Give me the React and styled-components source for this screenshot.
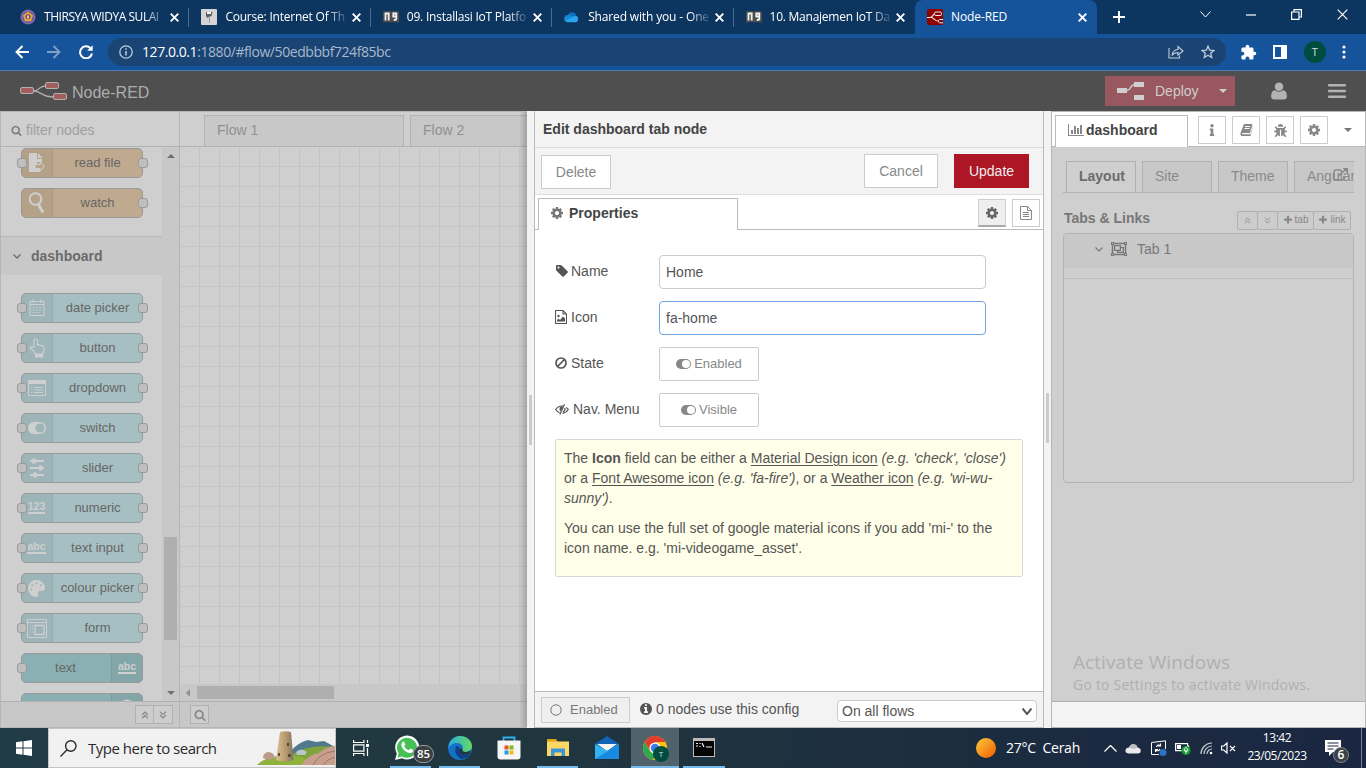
import React from "react";
import styled, { createGlobalStyle, css } from "styled-components";
import { FaBug, FaInfo, FaPalette, FaRegObjectGroup } from "react-icons/fa";
import { MdExtension } from "react-icons/md";

const Global = createGlobalStyle`
  * { box-sizing: border-box; }
  body { margin: 0; overflow: hidden; }
`;
const ui = `"Open Sans", "Noto Sans", sans-serif`;

const Screen = styled.div`
  width: 1366px; height: 768px; display: flex; flex-direction: column; overflow: hidden;
  font-family: "Liberation Sans", Arial, sans-serif; font-size: 14px; line-height: 20px; color: #555;
  svg { display: block; flex: none; }
`;

/* ---------- icons ---------- */
const P = {
  search: "M1216 832q0-185-131.5-316.5t-316.5-131.5-316.5 131.5-131.5 316.5 131.5 316.5 316.5 131.5 316.5-131.5 131.5-316.5zm512 832q0 52-38 90t-90 38q-54 0-90-38l-343-342q-179 124-399 124-143 0-273.5-55.5t-225-150-150-225-55.5-273.5 55.5-273.5 150-225 225-150 273.5-55.5 273.5 55.5 225 150 150 225 55.5 273.5q0 220-124 399l343 343q37 37 37 90z",
  cog: "M1152 896q0-106-75-181t-181-75-181 75-75 181 75 181 181 75 181-75 75-181zm512-109v222q0 12-8 23t-20 13l-185 28q-19 54-39 91 35 50 107 138 10 12 10 25t-9 23q-27 37-99 108t-94 71q-12 0-26-9l-138-108q-44 23-91 38-16 136-29 186-7 28-36 28h-222q-14 0-24.5-8.5t-11.5-21.5l-28-184q-49-16-90-37l-141 107q-10 9-25 9-14 0-25-11-126-114-165-168-7-10-7-23 0-12 8-23 15-21 51-66.5t54-70.5q-27-50-41-99l-183-27q-13-2-21-12.5t-8-23.5v-222q0-12 8-23t19-13l186-28q14-46 39-92-40-57-107-138-10-12-10-24 0-10 9-23 26-36 98.5-107.5t94.5-71.5q13 0 26 10l138 107q44-23 91-38 16-136 29-186 7-28 36-28h222q14 0 24.5 8.5t11.5 21.5l28 184q49 16 90 37l142-107q9-9 24-9 13 0 25 10 129 119 165 170 7 8 7 22 0 12-8 23-15 21-51 66.5t-54 70.5q26 50 41 98l183 28q13 2 21 12.5t8 23.5z",
  user: "M1600 1405q0 120-73 189.5t-194 69.5h-874q-121 0-194-69.5t-73-189.5q0-53 3.5-103.5t14-109 26.5-108.5 43-97.5 62-81 85.5-53.5 111.5-20q9 0 42 21.5t74.5 48 108 48 133.5 21.5 133.5-21.5 108-48 74.5-48 42-21.5q61 0 111.5 20t85.5 53.5 62 81 43 97.5 26.5 108.5 14 109 3.5 103.5zm-320-893q0 159-112.5 271.5t-271.5 112.5-271.5-112.5-112.5-271.5 112.5-271.5 271.5-112.5 271.5 112.5 112.5 271.5z",
  tag: "M576 448q0-53-37.5-90.5t-90.5-37.5-90.5 37.5-37.5 90.5 37.5 90.5 90.5 37.5 90.5-37.5 37.5-90.5zm1067 576q0 53-37 90l-491 492q-39 37-91 37-53 0-90-37l-715-716q-38-37-64.5-101t-26.5-117v-416q0-52 38-90t90-38h416q53 0 117 26.5t102 64.5l715 714q37 39 37 91z",
  plus: "M1600 736v192q0 40-28 68t-68 28h-416v416q0 40-28 68t-68 28h-192q-40 0-68-28t-28-68v-416h-416q-40 0-68-28t-28-68v-192q0-40 28-68t68-28h416v-416q0-40 28-68t68-28h192q40 0 68 28t28 68v416h416q40 0 68 28t28 68z",
  info: "M1152 1376v-160q0-14-9-23t-23-9h-96v-512q0-14-9-23t-23-9h-320q-14 0-23 9t-9 23v160q0 14 9 23t23 9h96v320h-96q-14 0-23 9t-9 23v160q0 14 9 23t23 9h448q14 0 23-9t9-23zm-128-896v-160q0-14-9-23t-23-9h-192q-14 0-23 9t-9 23v160q0 14 9 23t23 9h192q14 0 23-9t9-23zm640 416q0 209-103 385.5t-279.5 279.5-385.5 103-385.5-103-279.5-279.5-103-385.5 103-385.5 279.5-279.5 385.5-103 385.5 103 279.5 279.5 103 385.5z",
};
const Glyph = ({ name, size = 14 }) => (
  <svg width={size} height={size} viewBox="0 0 1792 1792" fill="currentColor"><path d={P[name]} /></svg>
);
const Line = ({ w = 12, h = w, box = `0 0 ${w} ${h}`, sw = 1.2, children }) => (
  <svg width={w} height={h} viewBox={box} fill="none" stroke="currentColor" strokeWidth={sw}>{children}</svg>
);
const CloseX = ({ s = 9, sw = 1.9 }) => <Line w={s} sw={sw}><path d={`M.7.7 ${s - 0.7} ${s - 0.7}M${s - 0.7}.7.7 ${s - 0.7}`} /></Line>;
const BarChart = () => (
  <svg width="16" height="14" viewBox="0 0 2048 1792" fill="currentColor"><path d="M640 896v512h-256v-512h256zm384-512v1024h-256v-1024h256zm1024 1152v128h-2048v-1536h128v1408h1920zm-640-896v768h-256v-768h256zm384-384v1152h-256v-1152h256z" /></svg>
);
const Toggle = () => (
  <svg width="15" height="10" viewBox="0 0 15 10"><rect width="15" height="10" rx="5" fill="#888" /><circle cx="10" cy="5" r="4" fill="#fff" /></svg>
);
const Chevron = ({ w = 8, h = 5, sw = 1.3 }) => <Line w={w} h={h} sw={sw}><path d={`M.5.5 ${w / 2} ${h - 1} ${w - 0.5}.5`} /></Line>;
const Double = ({ up, s = 8, sw = 1.2 }) => (
  <Line w={s} h={s} box="0 0 8 8" sw={sw}><path d={up ? "M1 4 4 1 7 4M1 7.4 4 4.4 7 7.4" : "M1 .6 4 3.6 7 .6M1 4 4 7 7 4"} /></Line>
);
const Caret = styled.i`
  width: 0; height: 0; border: ${p => p.$s || 4}px solid transparent; border-bottom-width: 0;
  border-top-color: ${p => p.$c}; ${p => p.$up && css`transform: rotate(180deg);`} ${p => p.$left && css`transform: rotate(90deg);`}
`;

/* ---------- browser ---------- */
const TabStrip = styled.div`height: 34px; display: flex; background: #0c3560; color: #fff; padding-left: 8px;`;
const BTab = styled.div`
  width: ${p => p.$w || 181.4}px; display: flex; align-items: center; padding: 0 10px 0 12px; position: relative;
  ${p => p.$active && css`background: #15549b; border-radius: 8px 8px 0 0;`}
  &::after { content: ""; position: absolute; right: 0; top: 8px; height: 19px; width: 1px; background: ${p => p.$active || p.$last ? "transparent" : "#4c6c8e"}; }
`;
const BTitle = styled.span`
  flex: 1; font: 12px/18px ${ui}; letter-spacing: ${p => p.$ls || -0.15}px; margin: 0 6px 0 8px; white-space: nowrap; overflow: hidden;
  ${p => !p.$full && css`mask-image: linear-gradient(90deg, #000 84%, rgba(0,0,0,.15));`}
`;
const WinControls = styled.div`margin-left: auto; display: flex; align-items: center; padding: 0 18px 5px 0; gap: 35px;`;
const NewTab = styled.div`padding: 11px 0 0 16px;`;
const Toolbar = styled.div`
  height: 37px; display: flex; align-items: center; background: #15549b; border-bottom: 1px solid #4a7db5; color: #fff; padding: 0 20px 0 15px;
`;
const NavIcons = styled.div`display: flex; gap: 18px; width: 93px; align-items: center;`;
const Omni = styled.div`
  width: 1118px; height: 28px; border-radius: 14px; background: #1a4474; display: flex; align-items: center; padding: 0 11px; color: #c3cddb;
`;
const Url = styled.span`font: 14px/20px ${ui}; letter-spacing: -.43px; margin-left: 9px; flex: 1; white-space: nowrap; color: #a9b9cc; b { font-weight: 400; color: #fff; }`;
const Star = styled.span`margin-left: 17px;`;
const Ext = styled.div`flex: 1; display: flex; align-items: center; justify-content: space-between; padding-left: 14px;`;
const Avatar = styled.span`
  width: ${p => p.$s}px; height: ${p => p.$s}px; border-radius: 50%; background: #004d40; color: #cfe0dc;
  font: ${p => p.$s * 0.5}px/${p => p.$s}px ${ui}; text-align: center;
`;

/* ---------- Node-RED shell ---------- */
const Header = styled.div`height: 40px; background: #4f4f4f; display: flex; align-items: center; color: #b3b3b3; padding: 0 20px;`;
const Brand = styled.span`font-size: 16px; margin: 3px 0 0 5px; flex: 1; color: #adadad;`;
const Deploy = styled.div`
  width: 130px; height: 30px; background: #99575f; color: #cfcfcf; display: flex; align-items: center; padding: 0 8px 0 12px; font-size: 14px; margin-right: 34px;
  span { margin-left: 10px; flex: 1; }
`;
const UserSlot = styled.div`margin-right: 39px;`;
const Body = styled.div`height: 617px; display: flex; background: #f3f3f3;`;
const Palette = styled.div`
  width: 180px; background: #cfcfcf; border: solid #b6b6b6; border-width: 1px; display: flex; flex-direction: column;
`;
const Filter = styled.div`
  height: 35px; display: flex; align-items: center; gap: 4px; padding: 2px 0 0 10px; border-bottom: 1px solid #b3b3b3; color: #7c7c7c;
  span { color: #9f9f9f; }
`;
const PaletteMid = styled.div`height: 554px; display: flex; overflow: hidden;`;
const PaletteList = styled.div`width: 161px; padding-top: 1px; overflow: hidden;`;
const VScroll = styled.div`
  flex: 1; background: #c8c8c8; display: flex; flex-direction: column; align-items: center; padding: 7px 0 6px;
`;
const VThumb = styled.div`width: 13px; height: 103px; background: #afafaf; margin: 379px 0 auto;`;
const Nodes = styled.div`display: flex; flex-direction: column; gap: 10px; padding: ${p => p.$top || 0}px 0 0 20px;`;
const NodeBox = styled.div`
  width: 122px; height: 30px; border: 1px solid #999; border-radius: 5px; display: flex; position: relative; font-size: 13px; color: #666;
  background: ${p => p.$bg}; flex-direction: ${p => (p.$rev ? "row-reverse" : "row")};
`;
const NodeIcon = styled.div`
  width: 31px; display: flex; align-items: center; justify-content: center; background: rgba(0,0,0,.05); color: #cfcfcf;
  padding-right: ${p => (p.$rev ? 0 : 1)}px;
  border-radius: ${p => (p.$rev ? "0 4px 4px 0" : "4px 0 0 4px")};
  ${p => (p.$rev ? "border-left" : "border-right")}: 1px solid rgba(0,0,0,.06);
`;
const NodeLabel = styled.span`flex: 1; text-align: center; line-height: 28px; white-space: nowrap; margin-right: ${p => (p.$rev ? 2 : 0)}px;`;
const Port = styled.i`
  position: absolute; top: 9px; ${p => (p.$side === "left" ? "left: -5px" : "right: -6px")}; width: 10px; height: 10px; border: 1px solid #999; border-radius: 3px; background: #bfbfbf;
`;
const Category = styled.div`
  height: 39px; margin: 18px 0 0; border-top: 1px solid #b9b9b9; background: #c8c8c8; display: flex; align-items: center; gap: 10px; padding-left: 12px; color: #6b6b6b; font-weight: bold;
`;
const Underlined = styled.span`font: bold 10.5px/9px "Liberation Sans", sans-serif; border-bottom: 2px solid currentColor; padding-bottom: 1px;`;
const Foot = styled.div`
  flex: 1; background: #c8c8c8; border-top: 1px solid #b0b0b0; display: flex; align-items: center; padding: ${p => p.$pad};
`;
const MiniBtn = styled.div`
  width: ${p => p.$w || 19}px; height: 19px; border: 1px solid #b0b0b0; margin-right: -1px; display: flex; align-items: center; justify-content: center; gap: 2px;
  color: #888; background: #cdcdcd; font-size: 10px; border-radius: ${p => p.$r || 0}px;
`;

const Workspace = styled.div`
  width: 347px; display: flex; flex-direction: column; background: #cfcfcf; border: solid #b6b6b6; border-width: 1px 0; position: relative; overflow: hidden;
  &::after { content: ""; position: absolute; right: 0; top: 0; bottom: 0; width: 8px; background: linear-gradient(90deg, transparent, rgba(0,0,0,.2)); }
`;
const FlowTabs = styled.div`height: 35px; display: flex; gap: 6px; padding: 3px 0 0 24px; border-bottom: 1px solid #b3b3b3;`;
const FlowTab = styled.div`
  width: 200px; flex: none; border: 1px solid #b3b3b3; border-bottom: 0; background: #c8c8c8; color: #909090; padding: 4px 12px;
`;
const Grid = styled.div`
  height: 537px; background-image: linear-gradient(#c4c4c4 1px, transparent 1px), linear-gradient(90deg, #c4c4c4 1px, transparent 1px);
  background-size: 20px 20px; background-position: 19px 19px;
`;
const HScroll = styled.div`height: 17px; background: #c8c8c8; display: flex; align-items: center; padding-left: 4px; gap: 5px;`;
const HThumb = styled.div`width: 137px; height: 13px; background: #afafaf;`;

const Separator = styled.div`
  width: ${p => p.$w}px; background: #f3f3f3; display: flex; align-items: center; justify-content: center; padding-bottom: ${p => p.$pb || 0}px;
  i { width: 3px; height: 50px; background: #ccc; }
`;

/* ---------- edit tray ---------- */
const Tray = styled.div`width: 510px; background: #fff; border: solid #bbb; border-width: 0 1px 1px; display: flex; flex-direction: column;`;
const TrayTitle = styled.div`height: 37px; background: #f3f3f3; border-bottom: 1px solid #ddd; font-weight: bold; color: #444; line-height: 36px; padding-left: 8px;`;
const TrayBar = styled.div`height: 47px; background: #f3f3f3; border-bottom: 1px solid #ddd; display: flex; padding: 6px 14px 0 6px;`;
const Btn = styled.div`
  width: ${p => p.$w}px; height: 34px; border: 1px solid ${p => (p.$primary ? "#ad1625" : "#ccc")}; background: ${p => (p.$primary ? "#ad1625" : "#fff")};
  color: ${p => (p.$primary ? "#eee" : "#888")}; display: flex; align-items: center; justify-content: center;
  margin-top: ${p => p.$mt || 0}px; margin-left: ${p => p.$ml || 0}px;
`;
const ToggleBtn = styled(Btn)`font-size: 13px; gap: 3px; border-radius: 2px; padding-bottom: 1px;`;
const TrayTabs = styled.div`height: 35px; display: flex; gap: 6px; padding: 3px 3px 0; border-bottom: 1px solid #bbb; position: relative;`;
const TrayTab = styled.div`
  width: 200px; height: 32px; border: 1px solid #bbb; border-bottom: 0; background: #fff; display: flex; align-items: center; gap: 5px; padding: 0 0 3px 11px;
  font-weight: bold; color: #444; margin-right: auto; svg { color: #777; }
`;
const IconBtn = styled.div`
  width: 28px; height: 28px; margin-top: 1px; border: 1px solid #ccc; display: flex; align-items: center; justify-content: center; color: #888;
  ${p => p.$on && css`background: #efefef; border-bottom: 2px solid #aaa; color: #666;`}
`;
const Form = styled.div`flex: 1; padding: 25px 20px 0; color: #555;`;
const Row = styled.div`height: 34px; margin-bottom: 12px; display: flex;`;
const Label = styled.div`width: 104px; height: 32px; display: flex; align-items: center; gap: ${p => p.$gap || 4}px;`;
const Input = styled.div`
  width: 327px; height: 34px; border: 1px solid ${p => (p.$focus ? "#72a5e4" : "#ccc")}; border-radius: 4px; padding: 6px; line-height: 20px;
`;
const Tip = styled.div`
  background: #ffffe9; border: 1px solid #d9dbd3; border-radius: 2px; height: 138px; padding: 8px; white-space: nowrap;
  p { margin: 0 0 10px; } u { text-underline-offset: 2px; }
`;
const TrayFoot = styled.div`height: 36px; background: #f3f3f3; border-top: 1px solid #bbb; display: flex; padding: 5px 6px 0;`;
const Status = styled.div`
  width: 89px; height: 26px; border: 1px solid #ccc; background: #efefef; display: flex; align-items: center; gap: 8px; padding-left: 8px; color: #777; font-size: 13px;
`;
const Usage = styled.div`display: flex; gap: 3px; align-items: center; height: 24px; margin-left: 9px; flex: 1;`;
const Select = styled.div`
  width: 200px; height: 22px; margin-top: 3px; border: 1px solid #ccc; border-radius: 4px; background: #fff; display: flex; align-items: center; justify-content: space-between; padding: 0 4px;
`;

/* ---------- sidebar ---------- */
const Sidebar = styled.div`width: 315px; border: 1px solid #b6b6b6; display: flex; flex-direction: column; background: #fff;`;
const SideTabs = styled.div`height: 35px; display: flex; gap: 6px; padding: 3px 13px 0 3px; border-bottom: 1px solid #bbb; position: relative;`;
const SideTab = styled.div`
  width: 133px; height: 32px; flex: none; border: 1px solid #bbb; border-bottom: 0; background: #fff; display: flex; align-items: center; gap: 2px; padding: 0 0 4px 12px;
  font-weight: bold; color: #444; margin-right: 4px; svg { color: #888; }
`;
const SideIcon = styled(IconBtn)`margin-top: 0;`;
const More = styled.div`margin-left: auto; padding-top: 13px;`;
const SideBody = styled.div`height: 554px; background: #cfcfcf; display: flex; flex-direction: column; padding: 14px 11px 0; color: #777; position: relative;`;
const SubTabs = styled.div`width: 291px; height: 32px; display: flex; gap: 6px; padding-left: 3px; border-bottom: 1px solid #b3b3b3; overflow: hidden; position: relative;`;
const SubTab = styled.div`
  width: 70px; height: 32px; flex: none; border: 1px solid #b0b0b0; border-bottom-color: ${p => (p.$on ? "#cfcfcf" : "#b3b3b3")};
  background: ${p => (p.$on ? "#cfcfcf" : "#c8c8c8")}; font-weight: ${p => (p.$on ? "bold" : "normal")}; color: ${p => (p.$on ? "#6b6b6b" : "#8a8a8a")}; padding: 4px 0 0 12px;
`;
const Popout = styled.div`position: absolute; right: 17px; top: 21px; color: #888;`;
const LinksHead = styled.div`display: flex; align-items: center; height: 20px; margin: 17px 4px 3px 1px; b { flex: 1; color: #777; margin-top: -4px; }`;
const Tree = styled.div`width: 291px; height: 250px; border: 1px solid #b3b3b3; border-radius: 4px; overflow: hidden;`;
const TreeRow = styled.div`height: 34px; background: #c8c8c8; display: flex; align-items: center; padding: 0 0 4px 31px; color: #777; span { margin-left: 10px; } svg + svg { margin-left: 8px; }`;
const TreeGap = styled.div`height: 11px; border-bottom: 1px solid #bdbdbd;`;
const Watermark = styled.div`
  margin: auto 0 6px 10px; font: 14px/20px ${ui}; letter-spacing: .22px; color: #b0b0b0; white-space: nowrap;
  div { font-size: 19px; line-height: 26px; letter-spacing: .07px; }
`;
const SideFoot = styled.div`flex: 1; border-top: 1px solid #b0b0b0; background: #f3f3f3;`;

/* ---------- taskbar ---------- */
const Taskbar = styled.div`height: 40px; display: flex; background: linear-gradient(90deg, #223c45, #20363f 40%, #1b2a40 80%, #1b2742); color: #fff;`;
const Start = styled.div`width: 48px; display: flex; align-items: center; justify-content: center;`;
const SearchBox = styled.div`
  width: 288px; background: #f1f1f1; border: 1px solid #c4c4c4; color: #2b2b2b; display: flex; align-items: center; padding-left: 11px;
  span { font: 15px/20px ${ui}; letter-spacing: -.5px; margin-left: 11px; flex: 1; white-space: nowrap; }
`;
const TaskApp = styled.div`
  width: ${p => p.$w || 49}px; display: flex; align-items: center; justify-content: center; position: relative; padding-bottom: 1px;
  background: ${p => (p.$active ? "#50626b" : "transparent")};
  &::after { content: ""; position: absolute; bottom: 0; height: 2px; left: ${p => (p.$active ? 0 : 4)}px; right: ${p => (p.$active ? 0 : 4)}px; background: ${p => (p.$run ? "#76b9ed" : "transparent")}; }
`;
const WaIcon = styled.span`margin-left: 2px;`;
const Count = styled.span`
  position: absolute; left: 27px; top: 17px; width: 21px; height: 18px; border-radius: 9px; background: #3a3f42; border: 1px solid #999; font: 600 11.5px/16px ${ui}; text-align: center;
`;
const OnIcon = styled.div`position: absolute; left: 22px; top: 18px; display: flex;`;
const SysTray = styled.div`margin-left: auto; display: flex; align-items: center; font: 14px/20px ${ui}; padding-right: 4px;`;
const Weather = styled.span`margin: 0 24px 0 10px; white-space: pre; letter-spacing: -.25px;`;
const TrayIcons = styled.div`display: flex; align-items: center; gap: 8.4px; width: 132px;`;
const Clock = styled.div`font: 12px/18px ${ui}; text-align: center; letter-spacing: -.45px; width: 60px; margin: 0 18px 2px 11px; white-space: nowrap;`;
const Notice = styled.div`position: relative; width: 37px; height: 40px; padding: 12px 0 0 0; border-right: 1px solid #76808e;`;
const NoticeCount = styled.span`
  position: absolute; left: 8px; top: 19px; width: 16px; height: 16px; border-radius: 50%; background: #3b4148; border: 1px solid #888; font: 600 12px/14px ${ui}; text-align: center;
`;

const Favicons = {
  crest: <svg width="16" height="16" viewBox="0 0 16 16"><circle cx="8" cy="8" r="7.6" fill="#6d5aa0" /><circle cx="8" cy="8" r="6.4" fill="none" stroke="#a99ac0" strokeWidth=".8" strokeDasharray="1 1" /><path d="m8 2.500 5 3.700-1.800 6H4.800L3 6.200z" fill="#e6a13a" /><circle cx="8" cy="7.800" r="2.500" fill="#5a4a9c" /><path d="M7 6.500h2v3H7z" fill="#f3cf61" /></svg>,
  lamp: <svg width="16" height="16" viewBox="0 0 16 16"><rect width="16" height="16" rx="1" fill="#d4d4d4" /><path d="M5 3h6.500l-1 4-3 1L6.500 9 5 7z" fill="#5e5e5e" /><path d="M6 3h4v2H6z" fill="#f7f7f7" /><path d="M8.500 8v5.500" stroke="#999" /></svg>,
  book: <svg width="16" height="16" viewBox="0 0 16 16"><path d="M0 2.500 7 2l1 1 1-1 7 .5v11L9 13l-1 1-1-1-7 .5z" fill="#4d4d4d" /><path d="M2.500 11.500v-7h3.200v7M13.300 7.500h-3v-3h3v5.500q0 1-2.500 1" fill="none" stroke="#f2f2f2" strokeWidth="1.800" /></svg>,
  cloud: <svg width="16" height="12" viewBox="0 0 17 12"><path d="M4 4a5 5 0 0 1 9-.5L8 8z" fill="#0f6cbd" /><path d="M4 3.800A4 4 0 0 0 .7 10L11 6 6.500 3.800z" fill="#1488d8" /><path d="M12.500 4.500a3.800 3.800 0 0 1 .5 7H3.500A3.600 3.600 0 0 1 .8 9.800L9 6z" fill="#2ba4ee" /></svg>,
  red: <svg width="16" height="16" viewBox="0 0 16 16"><rect width="16" height="16" rx="1.500" fill="#8f0000" /><path d="M0 8.500h3c3 0 2.500-4 6-4M4 8.300c3 .3 3 4 8 4h4" fill="none" stroke="#eee" strokeWidth="1.100" /><rect x="7.500" y="3" width="7" height="3.500" rx="1.300" fill="#8f0000" stroke="#eee" /><path d="M16 10.500h-3.500l-1 1v1.500l1 .8H16" fill="#8f0000" stroke="#eee" /></svg>,
};
const browserTabs = [
  ["crest", "THIRSYA WIDYA SULAI", -0.45], ["lamp", "Course: Internet Of Thi", -0.22], ["book", "09. Installasi IoT Platfo", -0.22],
  ["cloud", "Shared with you - One", -0.15], ["book", "10. Manajemen IoT Da", -0.25],
];

const nodeIcons = {
  file: <svg width="18" height="20" viewBox="0 0 18 20" fill="currentColor"><path d="M1 0h8v6h5v3H9v6h3v4H1z" /><path d="M10 0l4.500 5H10z" /><path d="M7 11.500h5V9l4.500 4.500L12 18v-2.500H7z" fill="#b8a58c" stroke="currentColor" /></svg>,
  watch: <svg width="18" height="22" viewBox="0 0 18 22" fill="none" stroke="currentColor"><circle cx="7.500" cy="7" r="5.800" strokeWidth="2" /><path d="m10.500 12.500 4.500 8" strokeWidth="3" /></svg>,
  date: <svg width="16" height="18" viewBox="0 0 16 18" fill="none" stroke="currentColor"><path d="M1 2.500h14v14H1zM1 5.500h14M4 0v4M12 0v4" /><path d="M4 8.500h9M4 11h9M4 13.500h7" strokeWidth=".8" strokeDasharray="2 1" /></svg>,
  button: <svg width="18" height="20" viewBox="0 0 18 20" fill="none" stroke="currentColor" strokeWidth="1.200"><path d="M6 9V2q2-2 3.500 0v5q2-1 3 .5 2-.5 2.500 1 1 0 1 1.500v3l-1.500 3H7.500Q6 12.500 2 10q0-2 4-.5zM7.500 16v3h7v-3" /><path d="M8 16.500h6v2H8z" fill="currentColor" /></svg>,
  dropdown: <svg width="18" height="16" viewBox="0 0 18 16"><path d="M.5.5h17v15H.5z" fill="none" stroke="currentColor" /><path d="M0 0h18v4H0z" fill="currentColor" /><path d="M3 7.500h1.500M3 10h1.500M3 12.500h1.500M6 7.500h9M6 10h9M6 12.500h9" stroke="currentColor" /></svg>,
  switch: <svg width="18" height="12" viewBox="0 0 18 12"><rect width="18" height="12" rx="6" fill="currentColor" /><circle cx="12" cy="6" r="4.600" fill="#9eb5b8" /></svg>,
  slider: <svg width="14" height="20" viewBox="0 0 14 20" stroke="currentColor" strokeWidth="1.800"><path d="M0 3h14M0 10h14M0 17h14" /><path d="M4 .5v5M10.500 7.500v5M5 14.500v5" strokeWidth="3.500" /></svg>,
  numeric: <Underlined>123</Underlined>,
  abc: <Underlined>abc</Underlined>,
  palette: <FaPalette size={17} />,
  form: <svg width="20" height="19" viewBox="0 0 20 19" fill="none" stroke="currentColor"><path d="M.5.5h19v18H.5zM.5 3.500h19" /><path d="M8 6.500h9v9H8z" strokeWidth="1.300" /><path d="M3 7h3M3 10h3M3 13h3" strokeDasharray="1 1" /></svg>,
  gauge: <svg width="18" height="18" viewBox="0 0 18 18"><circle cx="9" cy="9" r="7" fill="none" stroke="currentColor" strokeWidth="3" /></svg>,
};
const teal = "#a6bfc2";
const dashboardNodes = [
  ["date picker", "date"], ["button", "button"], ["dropdown", "dropdown"], ["switch", "switch"], ["slider", "slider"],
  ["numeric", "numeric"], ["text input", "abc"], ["colour picker", "palette"], ["form", "form"],
];
const PNode = ({ label, icon, bg = teal, input = true, output = true, rev }) => (
  <NodeBox $bg={bg} $rev={rev}>
    <NodeIcon $rev={rev}>{nodeIcons[icon]}</NodeIcon>
    <NodeLabel $rev={rev}>{label}</NodeLabel>
    {input && <Port $side="left" />}
    {output && <Port $side="right" />}
  </NodeBox>
);

const Browser = () => (
  <>
    <TabStrip>
      {browserTabs.map(([icon, title, ls], i) => (
        <BTab key={title} $last={i === 4}>{Favicons[icon]}<BTitle $ls={ls}>{title}</BTitle><CloseX /></BTab>
      ))}
      <BTab $active $w={182}>{Favicons.red}<BTitle $full $ls={-0.1}>Node-RED</BTitle><CloseX /></BTab>
      <NewTab><Line w={12} sw={2}><path d="M6 0v12M0 6h12" /></Line></NewTab>
      <WinControls>
        <Line w={11} h={7} sw={1}><path d="m.5.500 5 5.500 5-5.500" /></Line>
        <Line w={10} h={2} sw={1.200}><path d="M0 1h10" /></Line>
        <Line w={11} sw={1.200}><path d="M.6 3h7.400v7.400H.6zM3 3V.6h7.400V8H8" /></Line>
        <CloseX s={11} sw={1.200} />
      </WinControls>
    </TabStrip>
    <Toolbar>
      <NavIcons>
        <Line w={14} sw={1.900}><path d="M14 7H1.500M7.500 1l-6 6 6 6" /></Line>
        <svg width="14" height="14" viewBox="0 0 14 14" fill="none" stroke="#7f9fc6" strokeWidth="1.900"><path d="M0 7h12.500M6.500 1l6 6-6 6" /></svg>
        <Line w={14} sw={2}><path d="M11.500 3.200A6 6 0 1 0 13 8.500" /><path d="M13.700.3v5.500H8.200z" fill="currentColor" stroke="none" /></Line>
      </NavIcons>
      <Omni>
        <Line w={14} sw={1.300}><circle cx="7" cy="7" r="6.200" /><path d="M7 6v4.500M7 3.300v1.500" strokeWidth="1.500" /></Line>
        <Url><b>127.0.0.1</b>:1880/#flow/50edbbbf724f85bc</Url>
        <Line w={16} h={14} sw={1.100}><path d="M1 3v10h10.500v-2.500M4 10.500q.5-5.500 6-6V1.500L15 6l-5 4V7.500q-4 0-6 3z" /></Line>
        <Star><svg width="14" height="14" viewBox="0 0 14 14" fill="none" stroke="currentColor" strokeWidth="1.300"><path d="m7 1.200 1.700 4 4.300.3-3.300 2.800 1 4.200L7 10.300l-3.700 2.200 1-4.200L1 5.500l4.300-.3z" /></svg></Star>
      </Omni>
      <Ext>
        <MdExtension size={17} />
        <svg width="14" height="14" viewBox="0 0 14 14"><path d="M0 0h14v14H0zM2 2v10h6V2z" fill="#fff" fillRule="evenodd" /></svg>
        <Avatar $s={22}>T</Avatar>
        <svg width="4" height="14" viewBox="0 0 4 14" fill="#fff"><circle cx="2" cy="2" r="1.600" /><circle cx="2" cy="7" r="1.600" /><circle cx="2" cy="12" r="1.600" /></svg>
      </Ext>
    </Toolbar>
  </>
);

const logo = (
  <svg width="47" height="20" viewBox="0 -1 47 20" fill="none" stroke="#b0b0b0" strokeWidth="1.300"><path d="M13 9c7 0 5-5 13-5M13 9c9 0 8 6 21 6" /><g fill="#a35f5f" strokeWidth="1"><rect x=".5" y="5.500" width="13" height="6" rx="1.500" /><rect x="25.500" y=".5" width="13" height="6" rx="1.500" /><rect x="33.500" y="11.500" width="13" height="6" rx="1.500" /></g></svg>
);

const LeftPalette = () => (
  <Palette>
    <Filter><Glyph name="search" size={11} /><span>filter nodes</span></Filter>
    <PaletteMid>
      <PaletteList>
        <Nodes>
          <PNode label="read file" icon="file" bg="#bfaa90" />
          <PNode label="watch" icon="watch" bg="#bfaa90" input={false} />
        </Nodes>
        <Category><Chevron />dashboard</Category>
        <Nodes $top={18}>
          {dashboardNodes.map(([l, i]) => <PNode key={l} label={l} icon={i} />)}
          <PNode label="text" icon="abc" bg="#8bb0b3" output={false} rev />
          <PNode label="" icon="gauge" bg="#8bb0b3" output={false} input={false} rev />
        </Nodes>
      </PaletteList>
      <VScroll><Caret $c="#6f6f6f" $up /><VThumb /><Caret $c="#6f6f6f" /></VScroll>
    </PaletteMid>
    <Foot $pad="0 6px 0 134px"><MiniBtn><Double up /></MiniBtn><MiniBtn $w={20}><Double /></MiniBtn></Foot>
  </Palette>
);

const EditTray = () => (
  <Tray>
    <TrayTitle>Edit dashboard tab node</TrayTitle>
    <TrayBar><Btn $w={70} $mt={1}>Delete</Btn><Btn $w={74} $ml={253}>Cancel</Btn><Btn $w={75} $ml={16} $primary>Update</Btn></TrayBar>
    <TrayTabs>
      <TrayTab><Glyph name="cog" />Properties</TrayTab>
      <IconBtn $on><Glyph name="cog" /></IconBtn>
      <IconBtn><Line w={12} h={14} sw={1}><path d="M.5.5h7l4 4v9H.5zM7.500.5v4h4M3 6.500h6M3 8.500h6M3 10.500h6" /></Line></IconBtn>
    </TrayTabs>
    <Form>
      <Row><Label $gap={2}><Glyph name="tag" size={14} />Name</Label><Input>Home</Input></Row>
      <Row><Label><Line w={12} h={14} sw={1.100}><path d="M.5.5h7.500l3.500 3.500v9.500H.5zM8 .5V4h3.500" /><path d="M2 11.500V10l1.500-1.500L5 10l3-3.500 2 2v3z" fill="currentColor" stroke="none" /><circle cx="3.500" cy="6" r="1.200" fill="currentColor" stroke="none" /></Line>Icon</Label><Input $focus>fa-home</Input></Row>
      <Row><Label><Line w={12} sw={1.700}><circle cx="6" cy="6" r="5" /><path d="m2.500 9.500 7-7" /></Line>State</Label><ToggleBtn $w={100}><Toggle />Enabled</ToggleBtn></Row>
      <Row><Label><Line w={14} h={11} sw={1.200}><path d="M4.500 8.800Q2 7.500.7 5.500 3 2 7 2q1 0 1.800.2M11 3.500q1.500.8 2.300 2Q11 9 7.500 9.200M9.500.3 4.800 10.500" /><path d="M4.800 3.500q-1 2.500.7 3.800L8 3q-2-1-3.200.5z" fill="currentColor" stroke="none" /><path d="M9.800 4q.8 2.500-1.800 4" /></Line>Nav. Menu</Label><ToggleBtn $w={100}><Toggle />Visible</ToggleBtn></Row>
      <Tip>
        <p>The <b>Icon</b> field can be either a <u>Material Design icon</u> <i>(e.g. 'check', 'close')</i><br />or a <u>Font Awesome icon</u> <i>(e.g. 'fa-fire')</i>, or a <u>Weather icon</u> <i>(e.g. 'wi-wu-<br />sunny')</i>.</p>
        <p>You can use the full set of google material icons if you add 'mi-' to the<br />icon name. e.g. 'mi-videogame_asset'.</p>
      </Tip>
    </Form>
    <TrayFoot>
      <Status><Line w={12} sw={1}><circle cx="6" cy="6" r="5.200" /></Line>Enabled</Status>
      <Usage><Glyph name="info" />0 nodes use this config</Usage>
      <Select>On all flows<Chevron w={10} h={7} sw={2} /></Select>
    </TrayFoot>
  </Tray>
);

const RightSidebar = () => (
  <Sidebar>
    <SideTabs>
      <SideTab><BarChart />dashboard</SideTab>
      <IconBtn><FaInfo size={12} /></IconBtn>
      <IconBtn><svg width="13" height="12" viewBox="0 0 13 12"><path d="M4 0h8.500L10 9H2.500q-1 .8 0 1.300h8L13 2v1l-2.500 9H1.500Q0 11 .5 9z" fill="currentColor" /><path d="M5 2.500h5M4.500 4.500h5" stroke="#fff" /></svg></IconBtn>
      <IconBtn><FaBug size={13} /></IconBtn>
      <IconBtn><Glyph name="cog" /></IconBtn>
      <More><Caret as="div" $c="#777" /></More>
    </SideTabs>
    <SideBody>
      <SubTabs><SubTab $on>Layout</SubTab><SubTab>Site</SubTab><SubTab>Theme</SubTab><SubTab>Angular</SubTab></SubTabs>
      <Popout><Line w={15} h={13} sw={1.500}><path d="M8 2H3Q1 2 1 4v6q0 2 2 2h6q2 0 2-2V8M5.500 8l7-6.500" /><path d="M9.500 0H15v5.500z" fill="currentColor" stroke="none" /></Line></Popout>
      <LinksHead>
        <b>Tabs &amp; Links</b>
        <MiniBtn $w={21} $r={2}><Double up s={7} sw={1} /></MiniBtn><MiniBtn $w={21} $r={2}><Double s={7} sw={1} /></MiniBtn>
        <MiniBtn $w={37} $r={2}><Glyph name="plus" size={10} />tab</MiniBtn><MiniBtn $w={38} $r={2}><Glyph name="plus" size={10} />link</MiniBtn>
      </LinksHead>
      <Tree>
        <TreeRow><Chevron sw={1.1} /><FaRegObjectGroup size={16} /><span>Tab 1</span></TreeRow>
        <TreeGap />
      </Tree>
      <Watermark><div>Activate Windows</div>Go to Settings to activate Windows.</Watermark>
    </SideBody>
    <SideFoot />
  </Sidebar>
);

const WinTaskbar = () => (
  <Taskbar>
    <Start><svg width="16" height="16" viewBox="0 0 16 16" fill="#fff"><path d="M0 2.300 6.500 1.300v6.200H0zM7.500 1.200 16 0v7.500H7.500zM0 8.500h6.500v6.200L0 13.700zM7.500 8.500H16V16l-8.500-1.200z" /></svg></Start>
    <SearchBox>
      <Line w={17} sw={1.400}><circle cx="10.800" cy="6" r="5.200" /><path d="M7 9.800.5 16.500" /></Line>
      <span>Type here to search</span>
      <svg width="78" height="34" viewBox="0 0 78 34">
        <defs><linearGradient id="tower"><stop stopColor="#d9bf91" /><stop offset=".55" stopColor="#b99a6e" /><stop offset="1" stopColor="#7c7564" /></linearGradient></defs>
        <path d="M34 20q6-8 17-11l8 2 8-1 11 6v10H34z" fill="#51788b" /><path d="M34 24q17-11 44-8v18H20z" fill="#7ea43b" />
        <path d="M0 34q10-10 28-9 20-2 28 9z" fill="#8eb23c" /><path d="M6 27q0-5 5-6 6 0 7 6-6 3-12 0z" fill="#bd9a8b" />
        <path d="M39 21q5-5 11 0l-2 3h-8z" fill="#b8c6c7" /><path d="M23 1q5-1.500 11 0l2.500 28q-9 3-17.500 0z" fill="url(#tower)" /><path d="M21 22h2v3h-2zM30 12h2v3h-2zM31 23h3v3h-3z" fill="#5b4a35" />
        <path d="M44 34q8-11 18-12 6-6 16-7v19z" fill="#c79f8c" /><path d="M56 34q6-12 22-14M66 34q4-6 12-8" fill="none" stroke="#9f7668" />
      </svg>
    </SearchBox>
    <TaskApp $w={50}><svg width="16" height="16" viewBox="0 0 16 16" fill="none" stroke="#fff" strokeWidth="1.200"><path d="M.6 0v2.500h10.300V0M.6 4.800h10.300v6.400H.6zM.6 16v-2.500h10.300V16M14.500 0v3M14.500 8v8" /><path d="M13 4h3v3h-3z" fill="#fff" stroke="none" /></svg></TaskApp>
    <TaskApp $run>
      <WaIcon><svg width="36" height="26" viewBox="0 0 36 26"><path d="M1 25l1.800-6.500A12 12 0 1 1 8 23.300z" fill="#fff" /><path d="M3.500 22.500l1.100-4.200A10 10 0 1 1 8 21.500z" fill="#45c153" /><path d="M8.500 7q1.500-1 2 .5l.8 2q0 .7-1.200 1.800 1.700 3 4.700 4l1.500-1.700q3 1 3 1.700-.5 3-4 2.800Q9 16.500 7.300 10.500 7 8.500 8.500 7z" fill="#fff" /></svg></WaIcon>
      <Count>85</Count>
    </TaskApp>
    <TaskApp $run><svg width="24" height="24" viewBox="0 0 24 24"><defs><linearGradient id="edge" x1="0" x2="1"><stop stopColor="#2fa8dc" /><stop offset="1" stopColor="#63dc63" /></linearGradient></defs><circle cx="12" cy="12" r="12" fill="#1473c7" /><path d="M1 8C4 1 9 0 12 0c7 0 12 5 12 10 0 4-3 6-6.500 6-3 0-4-1.500-3-3C16 10 13 7 9 7 5 7 2 9 .5 12z" fill="url(#edge)" /><path d="M8 10q-3 8 5 13 7-1 9-5-8 2-10.500-2-1.500-3 0-5z" fill="#103f83" /><path d="M14.500 13q-1 3 3 3 3 0 5-2l-.5 4q-8 2-10.500-2-1-3 1-4z" fill="#20363f" /></svg></TaskApp>
    <TaskApp><svg width="24" height="24" viewBox="0 0 24 24"><path d="M6.500 5V1.500h11V5" fill="none" stroke="#2fb1ef" strokeWidth="1.800" /><path d="M.5 4.500h23v16q0 3-3 3h-17q-3 0-3-3z" fill="#f6f6f6" /><path d="M7.500 9.500H11.500v4h-4z" fill="#ef5023" /><path d="M12.500 9.500h4v4h-4z" fill="#7dba1e" /><path d="M7.500 14.500h4v4h-4z" fill="#18a2e8" /><path d="M12.500 14.500h4v4h-4z" fill="#fcb813" /></svg></TaskApp>
    <TaskApp $run><svg width="22" height="20" viewBox="0 0 22 20"><path d="M0 1h9l2 3H0z" fill="#e0a010" /><path d="M0 3.500h22v14.500H0z" fill="#ffd766" /><path d="M4 18v-7.500h14V18h-3.500v-3.500h-7V18z" fill="#3a96d9" /></svg></TaskApp>
    <TaskApp><svg width="24" height="23" viewBox="0 0 24 23"><path d="M0 8 12 0l12 8-12 8z" fill="#1262b8" /><path d="M2 8h20l-10 7z" fill="#f3f3f3" /><path d="M0 8l12 7 12-7v15H0z" fill="#30b4f1" /><path d="M0 23 24 8v15z" fill="#1a8ae0" /></svg></TaskApp>
    <TaskApp $run $active $w={48}>
      <svg width="24" height="24" viewBox="0 0 24 24"><circle cx="12" cy="12" r="12" fill="#fbc116" /><path d="M1.600 6A12 12 0 0 1 22.400 6H12L7 14.500z" fill="#e33b2e" /><path d="M1.600 6 7 15q2 3 6 3l-3 5.800A12 12 0 0 1 1.600 6z" fill="#2da94f" /><circle cx="12" cy="12" r="5.600" fill="#fff" /><circle cx="12" cy="12" r="4.300" fill="#3a7de8" /></svg>
      <OnIcon><Avatar $s={16}>T</Avatar></OnIcon>
    </TaskApp>
    <TaskApp $run $w={50}><svg width="22" height="19" viewBox="0 0 22 19"><path d="M0 0h22v19H0z" fill="#bbb" /><path d="M1 3h20v15H1z" fill="#050505" /><path d="M3 5.500h2M3 8h2M7 5v1M7 8v1M9 5l2 4M13 9h6" stroke="#eee" strokeWidth="1.200" /></svg></TaskApp>
    <SysTray>
      <svg width="20" height="20" viewBox="0 0 20 20"><defs><linearGradient id="sun" x2="1" y2="1"><stop offset=".2" stopColor="#fab531" /><stop offset=".8" stopColor="#f4710c" /></linearGradient></defs><circle cx="10" cy="10" r="10" fill="url(#sun)" /></svg>
      <Weather>27°C  Cerah</Weather>
      <TrayIcons>
        <Line w={13} h={7} sw={1.300}><path d="m.5 6.500 6-6 6 6" /></Line>
        <svg width="16" height="11" viewBox="0 0 16 11"><path d="M3.500 10.500Q0 10 .5 7 1 4.500 4 4.500 6 0 10 1.500 12 2 12.500 4.500q3.500.5 3.300 3.500-.3 2.500-3 2.500z" fill="#e9e9e9" /><path d="M4 4.500Q6 0 10 1.500q2 .5 2.500 3L9 6z" fill="#b9bec3" /></svg>
        <svg width="17" height="16" viewBox="0 0 17 16" fill="none" stroke="#fff"><path d="M9 14.500H1.500V2.500L15.500.8V9" /><path d="M10.500 5.500q-3-1.500-4 1.500M5.500 10q3 2 4.500-1M10.500 3.500v2.500H8M5.500 12V9.500H8" strokeWidth="1.100" /><circle cx="13" cy="12.500" r="3.500" fill="#2d73c4" stroke="none" /></svg>
        <svg width="16" height="13" viewBox="0 0 16 13"><path d="M.6 1.600h12v7H.6z" fill="none" stroke="#fff" strokeWidth="1.200" /><path d="M2 3h4v4H2zM13 3.500h1.200v3H13z" fill="#fff" /><circle cx="11" cy="8.500" r="4.500" fill="#129a2e" /><path d="M11 11.500V8M9 8.500q0-2 2-3 2 1 2 3l-2 1z" stroke="#fff" fill="none" /></svg>
        <svg width="13" height="13" viewBox="0 0 13 13" fill="none" stroke="#c6ccd4" strokeWidth="1.200"><path d="M1 12A11 11 0 0 1 12 1M4 12a8 8 0 0 1 8-8M7 12a5 5 0 0 1 5-5" /><circle cx="11" cy="11" r="1.300" fill="#fff" stroke="none" /></svg>
        <Line w={15} h={12} sw={1.200}><path d="M.6 4h2.200L6 1v10L2.800 8H.6zM9 4l5 5M14 4 9 9" /></Line>
      </TrayIcons>
      <Clock>13:42<br />23/05/2023</Clock>
      <Notice>
        <svg width="16" height="17" viewBox="0 0 16 17"><path d="M0 0h16v12H8l-4 4v-4H0z" fill="#fff" /><path d="M2.500 3h11M2.500 6h11M2.500 9h6" stroke="#1b2742" /></svg>
        <NoticeCount>6</NoticeCount>
      </Notice>
    </SysTray>
  </Taskbar>
);

export default function App() {
  return (
    <Screen>
      <Global />
      <Browser />
      <Header>
        {logo}<Brand>Node-RED</Brand>
        <Deploy>
          <svg width="28" height="18" viewBox="0 0 28 18" fill="#cfcfcf"><path d="M0 6h10v5H0zM17 0h10v5H17zM17 13h10v5H17z" /><path d="M10 8.500c4 0 3-6 8-6" fill="none" stroke="#cfcfcf" strokeWidth="1.400" /></svg>
          <span>Deploy</span><Caret $c="#cfcfcf" />
        </Deploy>
        <UserSlot><Glyph name="user" size={20} /></UserSlot>
        <svg width="18" height="14" viewBox="0 0 18 14" fill="#b3b3b3"><rect width="18" height="2.500" rx="1" /><rect y="5.700" width="18" height="2.500" rx="1" /><rect y="11.500" width="18" height="2.500" rx="1" /></svg>
      </Header>
      <Body>
        <LeftPalette />
        <Workspace>
          <FlowTabs><FlowTab>Flow 1</FlowTab><FlowTab>Flow 2</FlowTab></FlowTabs>
          <Grid />
          <HScroll><Caret $c="#8f8f8f" $left /><HThumb /></HScroll>
          <Foot $pad="0 10px"><MiniBtn><Glyph name="search" size={12} /></MiniBtn></Foot>
        </Workspace>
        <Separator $w={7}><i /></Separator>
        <EditTray />
        <Separator $w={7} $pb={4}><i /></Separator>
        <RightSidebar />
      </Body>
      <WinTaskbar />
    </Screen>
  );
}
